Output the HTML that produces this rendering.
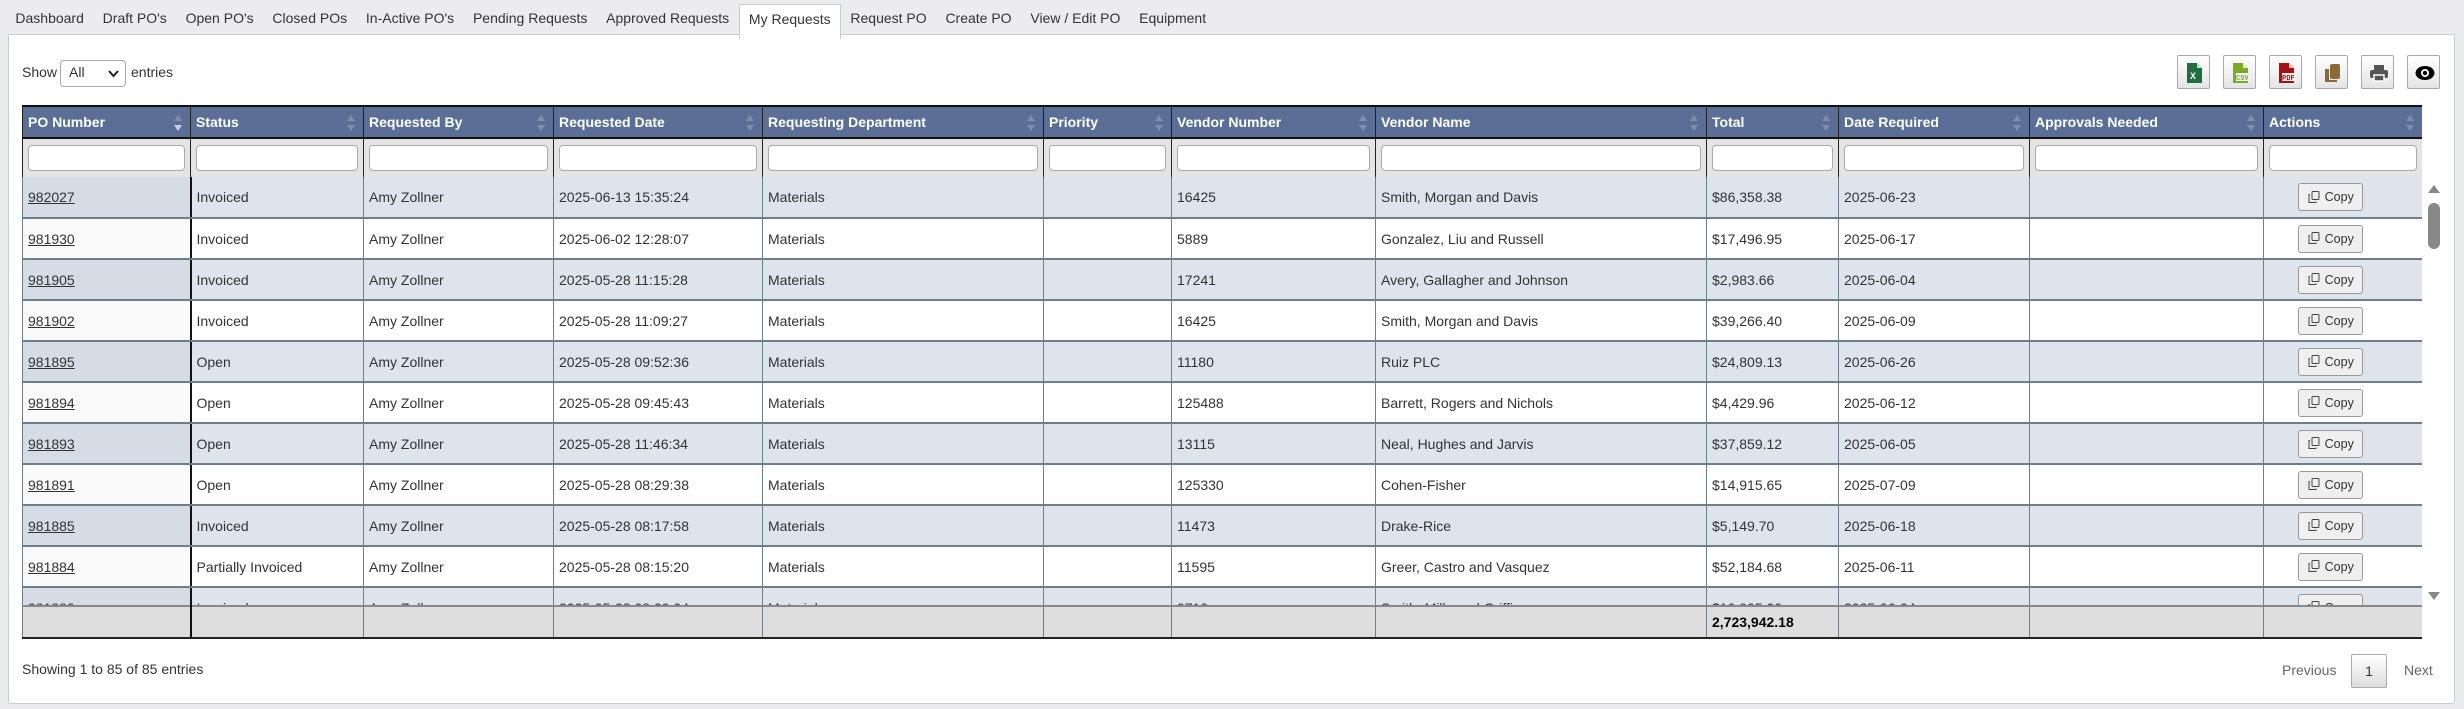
<!DOCTYPE html>
<html><head><meta charset="utf-8">
<style>
*{box-sizing:border-box;margin:0;padding:0}
body{width:2464px;height:709px;background:#ececee;font-family:"Liberation Sans",Arial,sans-serif;font-size:14px;color:#333;position:relative;overflow:hidden}
.tabs{position:absolute;left:6px;top:0;height:34px;display:flex;white-space:nowrap}
.tab{padding:10px 9.4px 0;height:34px;color:#333;font-size:14px}
.tab.act{background:#fff;border:1px solid #c8cdd3;border-bottom:none;height:35px;margin-top:4px;padding-top:6px;position:relative;z-index:2}
.panel{position:absolute;left:8px;top:34px;width:2447px;height:670px;background:#fff;border:1px solid #c8cdd3;border-radius:0 0 3px 3px}
.abs{position:absolute}
table{border-collapse:collapse;table-layout:fixed;position:absolute;left:22px;width:2399px}
td,th{overflow:hidden;white-space:nowrap;text-align:left;padding:0 5px}
.hd th{background:#5b6f96;color:#fff;font-weight:bold;height:32px;border-left:1px solid #222;border-top:2px solid #111;border-bottom:2px solid #111;position:relative;font-size:14px}
.hd th:after{content:"";position:absolute;right:8px;top:8px;width:0;height:0;border-left:4px solid transparent;border-right:4px solid transparent;border-bottom:6px solid #7e8fae;}
.hd th:before{content:"";position:absolute;right:8px;top:18px;width:0;height:0;border-left:4px solid transparent;border-right:4px solid transparent;border-top:6px solid #7e8fae;}
.hd th.s:before{border-top-color:#c8d0de}
.fl td{background:#e4e4e4;height:38px;border-left:1px solid #222;border-bottom:1px solid #222;padding:0 5px}
.fl input{width:100%;height:26px;border:1px solid #aaa;border-radius:4px;background:#fff;display:block}
.bd td{height:41px;border-bottom:2px solid #6e7f8c;border-left:1px solid #6e7f8c;color:#333}
.bd tr:nth-child(odd) td{background:#dde4ec}
.bd tr:nth-child(odd) td:first-child{background:#d5dce5}
.bd tr:nth-child(even) td{background:#fff}
.bd tr:nth-child(even) td:first-child{background:#fafafa}
.bd td:first-child{border-right:2px solid #111}
.bd td:first-child a{color:#333;text-decoration:underline}
.bd td:last-child{text-align:center;padding-right:29px}
.cp{display:inline-flex;align-items:center;justify-content:center;gap:5px;width:65px;height:28px;border:1px solid #999;border-radius:3px;background:#efefef;font-size:12.5px;color:#333;vertical-align:middle}
.ft td{background:#dedede;height:32px;border-left:1px solid #6e7f8c;border-top:2px solid #888;border-bottom:2px solid #222;vertical-align:middle;padding-top:0;font-weight:bold;color:#000}
.ft td:first-child{border-right:2px solid #111}
.btn{position:absolute;top:55px;width:33px;height:34px;border:1px solid #aaa;border-radius:2px;background:linear-gradient(#fff,#e4e4e4)}
.btn svg{position:absolute;left:7px;top:7px}
</style></head><body>
<div class="tabs">
<div class="tab">Dashboard</div><div class="tab">Draft PO's</div><div class="tab">Open PO's</div><div class="tab">Closed POs</div><div class="tab">In-Active PO's</div><div class="tab">Pending Requests</div><div class="tab">Approved Requests</div><div class="tab act">My Requests</div><div class="tab">Request PO</div><div class="tab">Create PO</div><div class="tab">View / Edit PO</div><div class="tab">Equipment</div>
</div>
<div class="panel"></div>
<div class="abs" style="left:22px;top:64px">Show</div>
<div class="abs" style="left:60px;top:60px;width:66px;height:27px;border:1px solid #aaa;border-radius:4px;background:#fff;padding:3px 8px">All<svg style="position:absolute;right:6px;top:9px" width="11" height="8"><path d="M1 1l4.5 5 4.5-5" stroke="#222" stroke-width="2" fill="none"/></svg></div>
<div class="abs" style="left:131px;top:64px">entries</div>

<div class="btn" style="left:2177px"><svg width="18" height="20"><path d="M2 0h10l5 5v15H2z" fill="#1e6e3e"/><path d="M12 0v5h5" fill="#bfe3c9"/><text x="5" y="16" font-size="9" font-weight="bold" fill="#fff" font-family="Liberation Sans">X</text></svg></div>
<div class="btn" style="left:2223px"><svg width="20" height="20"><path d="M2 0h10l5 5v15H2z" fill="#7aab25"/><path d="M12 0v5h5" fill="#dfeec5"/><rect x="5" y="10" width="15" height="8" fill="#f4f4f4"/><text x="5" y="17" font-size="7" font-weight="bold" fill="#7aab25" font-family="Liberation Mono">CSV</text></svg></div>
<div class="btn" style="left:2269px"><svg width="20" height="20"><path d="M2 0h10l5 5v15H2z" fill="#a90f12"/><path d="M12 0v5h5" fill="#f0c0c0"/><rect x="5" y="10" width="15" height="8" fill="#f4f4f4"/><text x="5" y="17" font-size="7" font-weight="bold" fill="#a90f12" font-family="Liberation Mono">PDF</text></svg></div>
<div class="btn" style="left:2315px"><svg width="20" height="20"><rect x="7" y="1" width="10" height="15" rx="2" fill="#8a6a3a"/><path d="M2 6h4v11h8v2H2z" fill="#8a6a3a"/></svg></div>
<div class="btn" style="left:2361px"><svg width="20" height="20"><rect x="5" y="2" width="10" height="5" fill="#555"/><rect x="1" y="7" width="18" height="8" rx="2" fill="#555"/><rect x="5" y="12" width="10" height="6" fill="#555" stroke="#fff" stroke-width="1.5"/></svg></div>
<div class="btn" style="left:2407px"><svg width="20" height="20"><ellipse cx="10" cy="10" rx="9.5" ry="7" fill="#000"/><circle cx="10" cy="10" r="4" fill="#fff"/><circle cx="10" cy="10" r="2.2" fill="#000"/></svg></div>

<table class="hd" style="top:105px">
<colgroup><col style="width:168px"><col style="width:173px"><col style="width:190px"><col style="width:209px"><col style="width:281px"><col style="width:128px"><col style="width:204px"><col style="width:331px"><col style="width:132px"><col style="width:191px"><col style="width:234px"><col style="width:158px"></colgroup>
<tr><th class="s">PO Number</th><th>Status</th><th>Requested By</th><th>Requested Date</th><th>Requesting Department</th><th>Priority</th><th>Vendor Number</th><th>Vendor Name</th><th>Total</th><th>Date Required</th><th>Approvals Needed</th><th>Actions</th></tr>
</table>
<table class="fl" style="top:139px">
<colgroup><col style="width:168px"><col style="width:173px"><col style="width:190px"><col style="width:209px"><col style="width:281px"><col style="width:128px"><col style="width:204px"><col style="width:331px"><col style="width:132px"><col style="width:191px"><col style="width:234px"><col style="width:158px"></colgroup>
<tr><td><input></td><td><input></td><td><input></td><td><input></td><td><input></td><td><input></td><td><input></td><td><input></td><td><input></td><td><input></td><td><input></td><td><input></td></tr>
</table>
<div class="abs" style="left:0;top:177px;width:2464px;height:428px;overflow:hidden">
<table class="bd" style="top:0">
<colgroup><col style="width:168px"><col style="width:173px"><col style="width:190px"><col style="width:209px"><col style="width:281px"><col style="width:128px"><col style="width:204px"><col style="width:331px"><col style="width:132px"><col style="width:191px"><col style="width:234px"><col style="width:158px"></colgroup>
<tr><td><a>982027</a></td><td>Invoiced</td><td>Amy Zollner</td><td>2025-06-13 15:35:24</td><td>Materials</td><td></td><td>16425</td><td>Smith, Morgan and Davis</td><td>$86,358.38</td><td>2025-06-23</td><td></td><td><span class="cp"><svg width="12" height="13"><rect x="4" y="0.5" width="7" height="8" rx="1" fill="none" stroke="#444"/><path d="M2 3.5H1v8h7v-1" fill="none" stroke="#444"/></svg>Copy</span></td></tr>
<tr><td><a>981930</a></td><td>Invoiced</td><td>Amy Zollner</td><td>2025-06-02 12:28:07</td><td>Materials</td><td></td><td>5889</td><td>Gonzalez, Liu and Russell</td><td>$17,496.95</td><td>2025-06-17</td><td></td><td><span class="cp"><svg width="12" height="13"><rect x="4" y="0.5" width="7" height="8" rx="1" fill="none" stroke="#444"/><path d="M2 3.5H1v8h7v-1" fill="none" stroke="#444"/></svg>Copy</span></td></tr>
<tr><td><a>981905</a></td><td>Invoiced</td><td>Amy Zollner</td><td>2025-05-28 11:15:28</td><td>Materials</td><td></td><td>17241</td><td>Avery, Gallagher and Johnson</td><td>$2,983.66</td><td>2025-06-04</td><td></td><td><span class="cp"><svg width="12" height="13"><rect x="4" y="0.5" width="7" height="8" rx="1" fill="none" stroke="#444"/><path d="M2 3.5H1v8h7v-1" fill="none" stroke="#444"/></svg>Copy</span></td></tr>
<tr><td><a>981902</a></td><td>Invoiced</td><td>Amy Zollner</td><td>2025-05-28 11:09:27</td><td>Materials</td><td></td><td>16425</td><td>Smith, Morgan and Davis</td><td>$39,266.40</td><td>2025-06-09</td><td></td><td><span class="cp"><svg width="12" height="13"><rect x="4" y="0.5" width="7" height="8" rx="1" fill="none" stroke="#444"/><path d="M2 3.5H1v8h7v-1" fill="none" stroke="#444"/></svg>Copy</span></td></tr>
<tr><td><a>981895</a></td><td>Open</td><td>Amy Zollner</td><td>2025-05-28 09:52:36</td><td>Materials</td><td></td><td>11180</td><td>Ruiz PLC</td><td>$24,809.13</td><td>2025-06-26</td><td></td><td><span class="cp"><svg width="12" height="13"><rect x="4" y="0.5" width="7" height="8" rx="1" fill="none" stroke="#444"/><path d="M2 3.5H1v8h7v-1" fill="none" stroke="#444"/></svg>Copy</span></td></tr>
<tr><td><a>981894</a></td><td>Open</td><td>Amy Zollner</td><td>2025-05-28 09:45:43</td><td>Materials</td><td></td><td>125488</td><td>Barrett, Rogers and Nichols</td><td>$4,429.96</td><td>2025-06-12</td><td></td><td><span class="cp"><svg width="12" height="13"><rect x="4" y="0.5" width="7" height="8" rx="1" fill="none" stroke="#444"/><path d="M2 3.5H1v8h7v-1" fill="none" stroke="#444"/></svg>Copy</span></td></tr>
<tr><td><a>981893</a></td><td>Open</td><td>Amy Zollner</td><td>2025-05-28 11:46:34</td><td>Materials</td><td></td><td>13115</td><td>Neal, Hughes and Jarvis</td><td>$37,859.12</td><td>2025-06-05</td><td></td><td><span class="cp"><svg width="12" height="13"><rect x="4" y="0.5" width="7" height="8" rx="1" fill="none" stroke="#444"/><path d="M2 3.5H1v8h7v-1" fill="none" stroke="#444"/></svg>Copy</span></td></tr>
<tr><td><a>981891</a></td><td>Open</td><td>Amy Zollner</td><td>2025-05-28 08:29:38</td><td>Materials</td><td></td><td>125330</td><td>Cohen-Fisher</td><td>$14,915.65</td><td>2025-07-09</td><td></td><td><span class="cp"><svg width="12" height="13"><rect x="4" y="0.5" width="7" height="8" rx="1" fill="none" stroke="#444"/><path d="M2 3.5H1v8h7v-1" fill="none" stroke="#444"/></svg>Copy</span></td></tr>
<tr><td><a>981885</a></td><td>Invoiced</td><td>Amy Zollner</td><td>2025-05-28 08:17:58</td><td>Materials</td><td></td><td>11473</td><td>Drake-Rice</td><td>$5,149.70</td><td>2025-06-18</td><td></td><td><span class="cp"><svg width="12" height="13"><rect x="4" y="0.5" width="7" height="8" rx="1" fill="none" stroke="#444"/><path d="M2 3.5H1v8h7v-1" fill="none" stroke="#444"/></svg>Copy</span></td></tr>
<tr><td><a>981884</a></td><td>Partially Invoiced</td><td>Amy Zollner</td><td>2025-05-28 08:15:20</td><td>Materials</td><td></td><td>11595</td><td>Greer, Castro and Vasquez</td><td>$52,184.68</td><td>2025-06-11</td><td></td><td><span class="cp"><svg width="12" height="13"><rect x="4" y="0.5" width="7" height="8" rx="1" fill="none" stroke="#444"/><path d="M2 3.5H1v8h7v-1" fill="none" stroke="#444"/></svg>Copy</span></td></tr>
<tr><td><a>981880</a></td><td>Invoiced</td><td>Amy Zollner</td><td>2025-05-28 08:09:04</td><td>Materials</td><td></td><td>9710</td><td>Smith, Mills and Griffin</td><td>$10,905.00</td><td>2025-06-04</td><td></td><td><span class="cp"><svg width="12" height="13"><rect x="4" y="0.5" width="7" height="8" rx="1" fill="none" stroke="#444"/><path d="M2 3.5H1v8h7v-1" fill="none" stroke="#444"/></svg>Copy</span></td></tr>
</table>
<svg class="abs" style="left:2426px;top:4px" width="16" height="420"><path d="M2 12l6-8 6 8z" fill="#888"/><rect x="2" y="22" width="12" height="46" rx="6" fill="#888"/><path d="M2 411l6 8 6-8z" fill="#888"/></svg>
</div>
<table class="ft" style="top:605px">
<colgroup><col style="width:168px"><col style="width:173px"><col style="width:190px"><col style="width:209px"><col style="width:281px"><col style="width:128px"><col style="width:204px"><col style="width:331px"><col style="width:132px"><col style="width:191px"><col style="width:234px"><col style="width:158px"></colgroup>
<tr><td></td><td></td><td></td><td></td><td></td><td></td><td></td><td></td><td>2,723,942.18</td><td></td><td></td><td></td></tr>
</table>
<div class="abs" style="left:22px;top:661px">Showing 1 to 85 of 85 entries</div>
<div class="abs" style="left:2282px;top:662px;color:#666">Previous</div>
<div class="abs" style="left:2351px;top:654px;width:36px;height:34px;border:1px solid #aaa;border-radius:2px;background:linear-gradient(#fff,#ddd);text-align:center;line-height:32px">1</div>
<div class="abs" style="left:2404px;top:662px;color:#666">Next</div>
</body></html>
